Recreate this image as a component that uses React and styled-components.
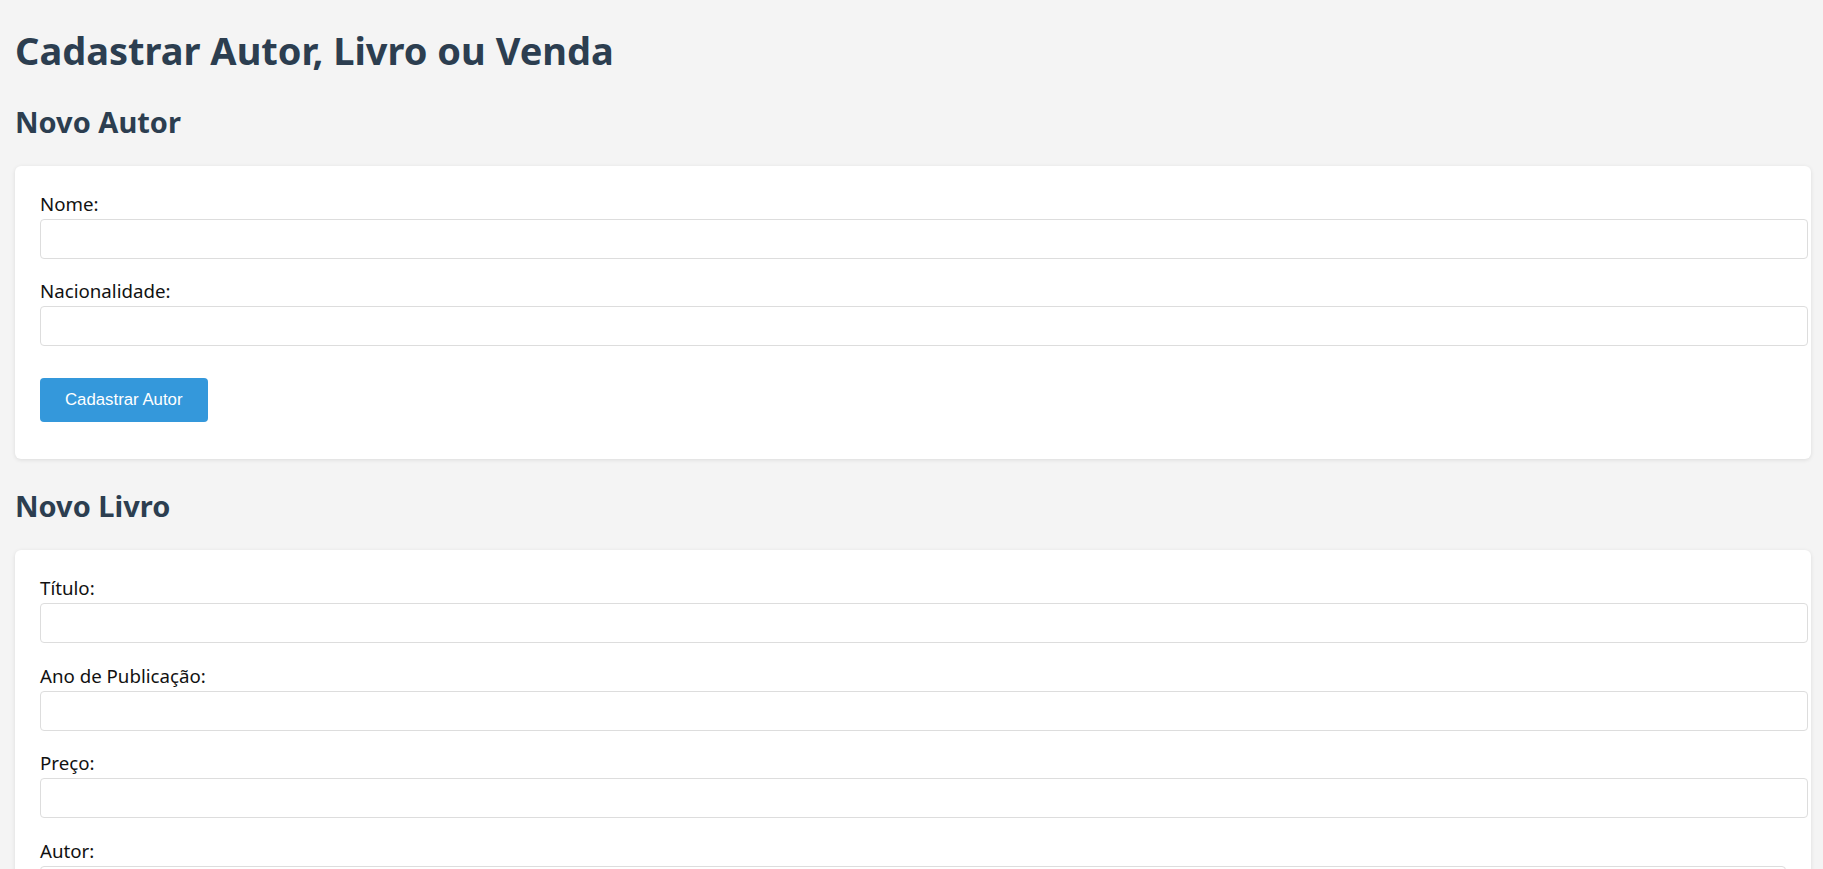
import React from 'react'
import styled, {createGlobalStyle} from 'styled-components'

const GlobalStyle = createGlobalStyle`
    body {
        margin: 0;
        background-color: #f4f4f4;
        font-family: "Noto Sans", "Open Sans", sans-serif;
        color: #111;
    }
`;

const Page = styled.div`
    padding: 24px 12px 40px 15px;
`;

const Title = styled.h1`
    margin: 0 0 26px 0;
    font-size: 38px;
    font-weight: 700;
    color: #2c3e50;
`;

const SectionTitle = styled.h2`
    margin: 0 0 25px 0;
    font-size: 29px;
    font-weight: 700;
    color: #2c3e50;
`;

const Card = styled.div`
    background-color: #fff;
    border-radius: 6px;
    box-shadow: 0 1px 4px rgba(0, 0, 0, 0.1);
    padding: 25px 25px 37px 25px;
    margin-bottom: 27px;
`;

const Group = styled.div`
    margin-bottom: 19.4px;
`;

const Label = styled.label`
    display: block;
    font-size: 18.7px;
    margin-bottom: 3px;
`;

const Input = styled.input`
    width: 100%;
    padding: 10px;
    border: 1px solid #ddd;
    border-radius: 4px;
    font-family: "Liberation Sans", Arial, sans-serif;
    font-size: 16px;
    background: #fff;
`;

const Select = styled.select`
    width: 100%;
    padding: 10px;
    border: 1px solid #ddd;
    border-radius: 4px;
    font-family: "Liberation Sans", Arial, sans-serif;
    font-size: 16px;
    background: #fff;
    height: 41px;
`;

const Button = styled.button`
    margin-top: 12.6px;
    padding: 12px 25px;
    border: none;
    border-radius: 4px;
    background-color: #3498db;
    color: #fff;
    font-family: "Liberation Sans", Arial, sans-serif;
    font-size: 16.8px;
    cursor: pointer;
`;

const Field = ({label, children}) => (
    <Group>
        <Label>{label}</Label>
        {children}
    </Group>
)

const App = () => {
    return (
        <Page>
            <GlobalStyle/>
            <Title>Cadastrar Autor, Livro ou Venda</Title>

            <SectionTitle>Novo Autor</SectionTitle>
            <Card>
                <Field label="Nome:"><Input type="text"/></Field>
                <Field label="Nacionalidade:"><Input type="text"/></Field>
                <Button>Cadastrar Autor</Button>
            </Card>

            <SectionTitle>Novo Livro</SectionTitle>
            <Card>
                <Field label="Título:"><Input type="text"/></Field>
                <Field label="Ano de Publicação:"><Input type="number"/></Field>
                <Field label="Preço:"><Input type="number"/></Field>
                <Field label="Autor:">
                    <Select>
                        <option value=""></option>
                    </Select>
                </Field>
                <Button>Cadastrar Livro</Button>
            </Card>
        </Page>
    );
}

export default App;
